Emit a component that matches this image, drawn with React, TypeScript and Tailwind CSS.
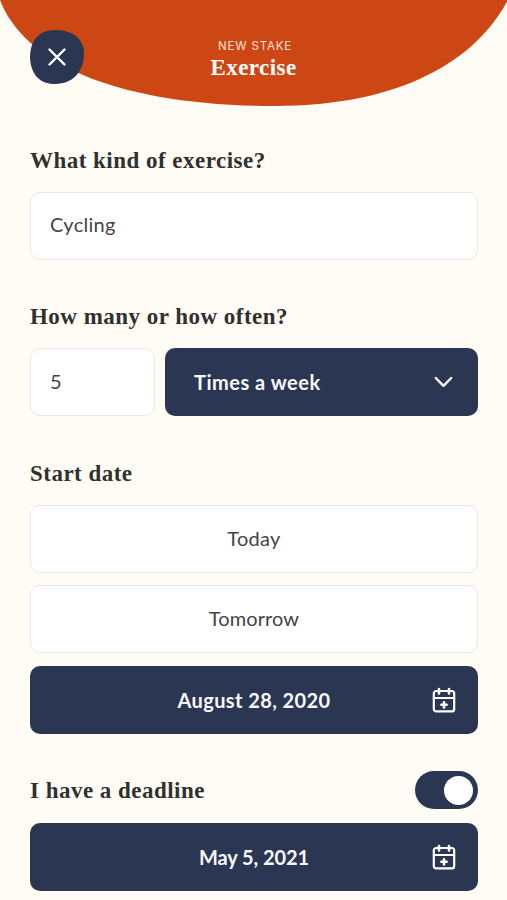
import { useState } from "react"

const serif = "font-['Liberation_Serif',serif] font-bold"

function CalendarIcon() {
  return (
    <svg
      width="24"
      height="26"
      viewBox="0 0 24 26"
      fill="none"
      stroke="white"
      strokeWidth="2.2"
      strokeLinecap="round"
      strokeLinejoin="round"
      className="absolute right-[22.5px] top-[21px]"
    >
      <rect x="1.8" y="4" width="20.4" height="20.4" rx="2.5" />
      <path d="M2 11H22" />
      <path d="M7 2V6.5M17 2V6.5" strokeWidth="2.6" />
      <path d="M12 15.2V20.4M9.4 17.8H14.6" strokeWidth="2.6" />
    </svg>
  )
}

function Title({ text }: { text: string }) {
  return (
    <h2
      className={`${serif} pt-px text-[23px] leading-[29px] tracking-[0.48px] text-[#30312f] whitespace-nowrap`}
    >
      {text}
    </h2>
  )
}

function DayButton({ text, spacing }: { text: string; spacing: string }) {
  return (
    <button
      className={`${spacing} block w-full h-[68px] pb-0.5 bg-white border border-[#e8e7e5] rounded-[10px] text-center text-[#444446]`}
    >
      {text}
    </button>
  )
}

function DateButton({ text, spacing }: { text: string; spacing: string }) {
  return (
    <button
      className={`${spacing} relative block w-full h-[68px] bg-[#2a3652] rounded-[10px] text-center font-bold text-[#f8f9ff]`}
    >
      {text}
      <CalendarIcon />
    </button>
  )
}

function App() {
  const [kind, setKind] = useState("Cycling")
  const [amount, setAmount] = useState("5")
  const [hasDeadline, setHasDeadline] = useState(true)

  return (
    <div className="relative w-[507px] h-[900px] overflow-hidden bg-[#fffcf5] font-['Lato',sans-serif] text-[20px]">
      <svg
        width="507"
        height="107"
        viewBox="0 0 507 107"
        className="absolute left-0 top-0"
      >
        <path d="M0 0C25 65 120 106 275 106C388 106 471 69 508 0Z" fill="#cd4714" />
      </svg>

      <header className="relative h-[145px] pt-[39px] text-center text-white">
        <button className="absolute left-[30px] top-[30px]" aria-label="Close">
          <svg width="54" height="54" viewBox="0 0 54 54" fill="none">
            <path
              d="M25 0C38 0 52 5 54 21C55 39 45 54 25 54C9 54 1 44 0 28C0 11 8 0 25 0Z"
              fill="#2a3652"
            />
            <path
              d="M19.5 19.5L34.5 34.5M34.5 19.5L19.5 34.5"
              stroke="white"
              strokeWidth="2.4"
              strokeLinecap="round"
            />
          </svg>
        </button>
        <div className="font-['Inter',sans-serif] text-[11.5px] leading-[15px] tracking-[0.85px] pl-[3px] text-[#ffe4d8]">
          NEW STAKE
        </div>
        <h1 className={`${serif} text-[23px] leading-[28px] tracking-[0.45px]`}>
          Exercise
        </h1>
      </header>

      <main className="relative pl-[30px] pr-[29px]">
        <section className="h-[156px]">
          <Title text="What kind of exercise?" />
          <input
            className="mt-[17px] w-full h-[68px] px-[19px] pb-[4px] bg-white border border-[#e8e7e5] rounded-[10px] tracking-[0.3px] text-[#444446]"
            value={kind}
            onChange={(e) => setKind(e.target.value)}
          />
        </section>

        <section className="h-[157px]">
          <Title text="How many or how often?" />
          <div className="mt-[17px] flex gap-[10px]">
            <input
              className="w-[125px] h-[68px] px-[19px] pb-[2px] bg-white border border-[#e8e7e5] rounded-[10px] text-[#444446]"
              value={amount}
              onChange={(e) => setAmount(e.target.value)}
            />
            <button className="flex flex-1 h-[68px] items-center justify-between pl-[29px] pr-[25px] bg-[#2a3652] rounded-[10px] font-bold tracking-[0.5px] text-[#f8f9ff]">
              Times a week
              <svg
                width="19"
                height="12"
                viewBox="0 0 19 12"
                fill="none"
                stroke="white"
                strokeWidth="2.4"
                strokeLinecap="round"
                strokeLinejoin="round"
              >
                <path d="M1.8 2L9.5 9.8L17.2 2" />
              </svg>
            </button>
          </div>
        </section>

        <section>
          <Title text="Start date" />
          <div className="mt-[17px] flex flex-col">
            <DayButton text="Today" spacing="tracking-[0.3px]" />
            <div className="mt-[12px] mb-[13px]">
              <DayButton text="Tomorrow" spacing="tracking-[0.1px]" />
            </div>
            <DateButton text="August 28, 2020" spacing="tracking-[0.4px]" />
          </div>
        </section>

        <section className="mt-[37px]">
          <div className="flex h-[38px] items-center justify-between">
            <Title text="I have a deadline" />
            <button
              className={`flex w-[63px] h-[38px] items-center rounded-full bg-[#2a3652] px-[5px] ${hasDeadline ? "justify-end" : "justify-start"}`}
              onClick={() => setHasDeadline(!hasDeadline)}
              aria-label="Deadline"
            >
              <span className="size-[29px] rounded-full bg-white" />
            </button>
          </div>
          {hasDeadline && (
            <div className="mt-[14px]">
              <DateButton text="May 5, 2021" spacing="tracking-[-0.1px]" />
            </div>
          )}
        </section>
      </main>
    </div>
  )
}

export default App
